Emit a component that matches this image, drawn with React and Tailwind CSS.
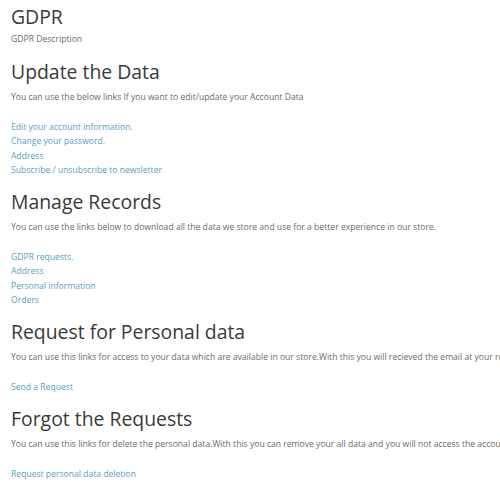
export default function App() {
  const H = ({ children, className = "" }) => (
    <h2 className={"text-[19.4px] leading-[26px] text-[#3a3a3a] font-normal " + className}>{children}</h2>
  );
  const P = ({ children, className = "" }) => (
    <p className={"text-[8.6px] leading-[14.4px] text-[#6b6b6b] " + className}>{children}</p>
  );
  const Links = ({ items, className = "" }) => (
    <div className={"flex flex-col items-start " + className}>
      {items.map((t) => (
        <a key={t} href="#" className="text-[8.6px] leading-[14.4px] text-[#5d9cc0]">
          {t}
        </a>
      ))}
    </div>
  );
  return (
    <div
      className="w-[500px] h-[500px] overflow-hidden bg-white whitespace-nowrap pl-[11px] pt-[4px]"
      style={{ fontFamily: '"Open Sans", sans-serif' }}
    >
      <H>GDPR</H>
      <P className="mt-[2px]">GDPR Description</P>

      <H className="mt-[13px]">Update the Data</H>
      <P className="mt-[5px]">You can use the below links If you want to edit/update your Account Data</P>
      <Links
        className="mt-[15px]"
        items={["Edit your account information.", "Change your password.", "Address", "Subscribe / unsubscribe to newsletter"]}
      />

      <H className="mt-[12px]">Manage Records</H>
      <P className="mt-[5px]">You can use the links below to download all the data we store and use for a better experience in our store.</P>
      <Links className="mt-[15px]" items={["GDPR requests.", "Address", "Personal information", "Orders"]} />

      <H className="mt-[12px]">Request for Personal data</H>
      <P className="mt-[5px]">
        You can use this links for access to your data which are available in our store.With this you will recieved the email at your registered email address.
      </P>
      <Links className="mt-[15px]" items={["Send a Request"]} />

      <H className="mt-[12px]">Forgot the Requests</H>
      <P className="mt-[5px]">
        You can use this links for delete the personal data.With this you can remove your all data and you will not access the account again.
      </P>
      <Links className="mt-[15px]" items={["Request personal data deletion"]} />
    </div>
  );
}
